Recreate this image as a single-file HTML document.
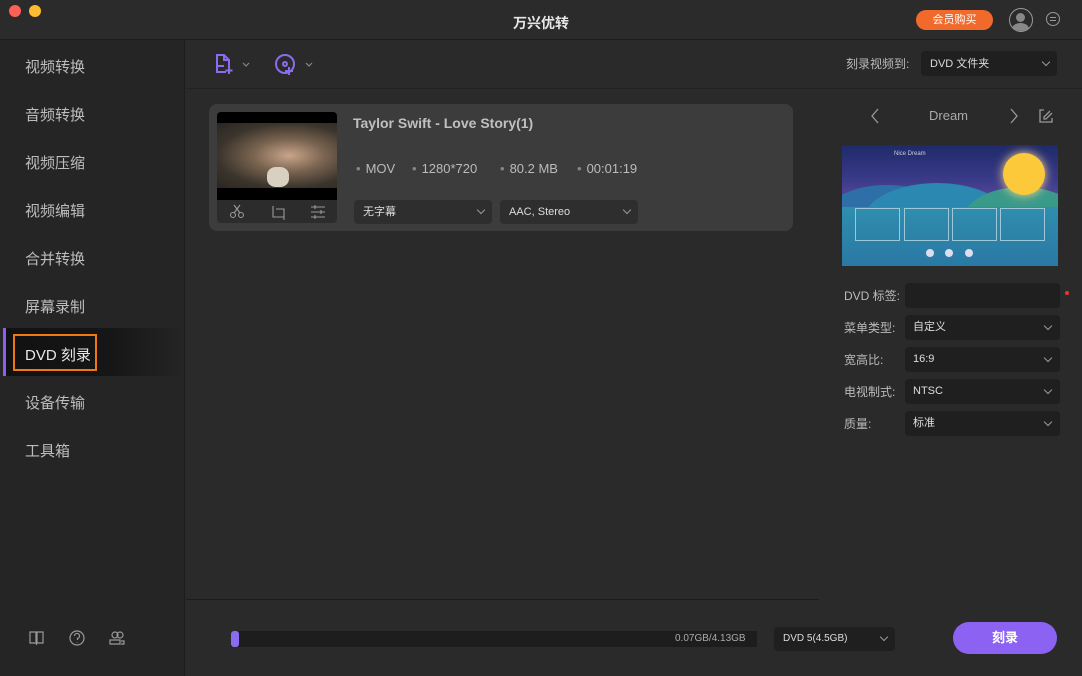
<!DOCTYPE html>
<html><head><meta charset="utf-8"><style>
*{margin:0;padding:0;box-sizing:border-box}
body{width:1082px;height:676px;overflow:hidden;background:#2a2a2a;font-family:"Liberation Sans","Noto Sans CJK SC",sans-serif;position:relative;color:#ccc}
.a{position:absolute}
.side{left:0;top:40px;width:185px;height:636px;background:#252525;border-right:1px solid #1c1c1c}
.si{position:absolute;left:25px;font-size:15px;color:#bdbdbd}
.sel{background:#313131;border-radius:4px;color:#ddd;font-size:11px;padding-left:9px;line-height:26px}
.chev{position:absolute;right:8px;top:8px;width:6px;height:6px;border-right:1px solid #999;border-bottom:1px solid #999;transform:rotate(45deg)}
.lbl{position:absolute;left:844px;font-size:12px;color:#bbb}
.f{position:absolute;left:905px;width:155px;height:25px;background:#1f1f1f;border-radius:4px;font-size:11px;color:#ddd;line-height:25px;padding-left:8px}
.f .chev{top:8px;right:9px}
.m{position:absolute;top:161px;font-size:13px;color:#bbb}
.m b{color:#888;font-weight:normal;margin-right:5px}
</style></head><body>
<div class="a" style="left:0;top:0;width:1082px;height:40px;background:#2b2b2b;border-bottom:1px solid #1e1e1e"></div>
<div class="a" style="left:9px;top:5px;width:12px;height:12px;border-radius:50%;background:#fe5f57"></div>
<div class="a" style="left:29px;top:5px;width:12px;height:12px;border-radius:50%;background:#febc2e"></div>
<div class="a" style="left:0;top:13px;width:1082px;text-align:center;font-size:14px;color:#e6e6e6;font-weight:bold">万兴优转</div>
<div class="a" style="left:916px;top:10px;width:77px;height:20px;border-radius:10px;background:#f26a2b;color:#fff;font-size:11px;text-align:center;line-height:20px">会员购买</div>
<div class="a" style="left:1009px;top:8px;width:24px;height:24px;border-radius:50%;border:1.5px solid #999;overflow:hidden"><div class="a" style="left:6px;top:4px;width:9px;height:9px;border-radius:50%;background:#888"></div><div class="a" style="left:2px;top:14px;width:17px;height:12px;border-radius:50%;background:#888"></div></div>
<div class="a" style="left:1046px;top:12px;width:14px;height:14px;border-radius:50%;border:1.3px solid #999"><div class="a" style="left:3px;top:4px;width:6px;border-top:1px solid #999"></div><div class="a" style="left:3px;top:7px;width:6px;border-top:1px solid #999"></div></div>

<div class="a side"></div>
<div class="si" style="top:56px">视频转换</div>
<div class="si" style="top:104px">音频转换</div>
<div class="si" style="top:152px">视频压缩</div>
<div class="si" style="top:200px">视频编辑</div>
<div class="si" style="top:248px">合并转换</div>
<div class="si" style="top:296px">屏幕录制</div>
<div class="a" style="left:3px;top:328px;width:181px;height:48px;background:linear-gradient(90deg,#111 0%,#161616 60%,#252525 100%)"></div>
<div class="a" style="left:3px;top:328px;width:3px;height:48px;background:#8b5cf6"></div>
<div class="a" style="left:13px;top:334px;width:84px;height:37px;border:2.5px solid #f07a10"></div>
<div class="si" style="top:344px;color:#e8e8e8">DVD 刻录</div>
<div class="si" style="top:392px">设备传输</div>
<div class="si" style="top:440px">工具箱</div>
<svg class="a" style="left:28px;top:629px" width="110" height="18" fill="none" stroke="#999" stroke-width="1.2"><path d="M2 3h6v11H2zM9 3h6v11H9zM8.5 14v2"/><circle cx="49" cy="9" r="7"/><path d="M46.5 7a2.5 2.5 0 1 1 3 2.4V11M49 13v.5"/><circle cx="87" cy="6" r="3"/><circle cx="92" cy="6" r="3"/><path d="M82 11h10v4H82zM93 12h3v3h-3"/></svg>

<div class="a" style="left:186px;top:88px;width:896px;border-top:1px solid #222"></div>
<svg class="a" style="left:212px;top:52px" width="110" height="26" fill="none" stroke="#8b6cf0" stroke-width="2"><path d="M14 20H5V3h7l5 5v7M12 3v5h5M6 14h6M17 15v7M13.5 18.5h7"/><circle cx="73" cy="12" r="9"/><circle cx="73" cy="12" r="2"/><path d="M77 15v8M73 19h8"/><path d="M31 11l3 3 3-3M94 11l3 3 3-3" stroke="#888" stroke-width="1.2"/></svg>
<div class="a" style="left:846px;top:55px;font-size:12px;color:#bbb">刻录视频到:</div>
<div class="a sel" style="left:921px;top:51px;width:136px;height:25px;background:#1f1f1f">DVD 文件夹<div class="chev"></div></div>

<div class="a" style="left:209px;top:104px;width:584px;height:127px;background:#3c3c3c;border-radius:8px"></div>
<div class="a" style="left:217px;top:112px;width:120px;height:111px;background:#2c2c2c;border-radius:4px;overflow:hidden">
<div class="a" style="left:0;top:0;width:120px;height:88px;background:#000"></div>
<div class="a" style="left:0;top:11px;width:120px;height:65px;background:radial-gradient(ellipse at 60% 50%,#c9a58a 0%,#7a6450 35%,#3a342c 70%,#2a2620 100%)"></div>
<div class="a" style="left:50px;top:55px;width:22px;height:20px;background:#d8d0c0;border-radius:40%"></div>
</div>
<svg class="a" style="left:228px;top:203px" width="100" height="18" fill="none" stroke="#999" stroke-width="1.1"><circle cx="5" cy="12" r="2.5"/><circle cx="13" cy="12" r="2.5"/><path d="M6 10L12 2M12 10L6 2"/><path d="M45 3v11h11M48 6h8v11"/><path d="M83 4h14M83 9h14M83 14h14M87 2v4M93 7v4M87 12v4"/></svg>
<div class="a" style="left:353px;top:115px;font-size:14px;font-weight:bold;color:#c0c0c0">Taylor Swift - Love Story(1)</div>
<div class="m" style="left:356px"><b>•</b>MOV</div>
<div class="m" style="left:412px"><b>•</b>1280*720</div>
<div class="m" style="left:500px"><b>•</b>80.2 MB</div>
<div class="m" style="left:577px"><b>•</b>00:01:19</div>
<div class="a sel" style="left:354px;top:200px;width:138px;height:24px;line-height:24px;background:#2e2e2e">无字幕<div class="chev" style="top:7px"></div></div>
<div class="a sel" style="left:500px;top:200px;width:138px;height:24px;line-height:24px;background:#2e2e2e">AAC, Stereo<div class="chev" style="top:7px"></div></div>

<svg class="a" style="left:868px;top:106px" width="192" height="20" fill="none" stroke="#999" stroke-width="1.3"><path d="M10 3L4 10l6 7M143 3l6 7-6 7M182 5l-6 6v2h2l6-6M176 4h-4v12h12v-4"/></svg>
<div class="a" style="left:929px;top:108px;font-size:13px;color:#aaa">Dream</div>
<div class="a" style="left:842px;top:145px;width:216px;height:121px;overflow:hidden;background:linear-gradient(180deg,#1f2a6a 0%,#3b3b8a 30%,#5a4a9a 45%,#2f7aa0 60%,#1f7aa5 80%,#2b6e9c 100%)">
<div class="a" style="left:-20px;top:40px;width:130px;height:70px;border-radius:50%;background:#2e6fa8"></div>
<div class="a" style="left:20px;top:38px;width:150px;height:80px;border-radius:50%;background:#2b88b0"></div>
<div class="a" style="left:120px;top:42px;width:120px;height:70px;border-radius:50%;background:#3a9a8a"></div>
<div class="a" style="left:0;top:62px;width:216px;height:60px;background:linear-gradient(180deg,#2f8eae,#2a78a4)"></div>
<div class="a" style="left:161px;top:8px;width:42px;height:42px;border-radius:50%;background:#fcc93a;box-shadow:0 0 10px #fd8"></div>
<div class="a" style="left:52px;top:6px;font-size:6px;color:#ccd">Nice Dream</div>
<div class="a" style="left:13px;top:63px;width:45px;height:33px;border:1px solid #9cc8d8"></div>
<div class="a" style="left:62px;top:63px;width:45px;height:33px;border:1px solid #9cc8d8"></div>
<div class="a" style="left:110px;top:63px;width:45px;height:33px;border:1px solid #9cc8d8"></div>
<div class="a" style="left:158px;top:63px;width:45px;height:33px;border:1px solid #9cc8d8"></div>
<div class="a" style="left:84px;top:104px;width:8px;height:8px;border-radius:50%;background:#dde"></div>
<div class="a" style="left:103px;top:104px;width:8px;height:8px;border-radius:50%;background:#dde"></div>
<div class="a" style="left:123px;top:104px;width:8px;height:8px;border-radius:50%;background:#dde"></div>
</div>
<div class="lbl" style="top:287px">DVD 标签:</div>
<div class="f" style="top:283px"></div>
<div class="a" style="left:1065px;top:291px;width:4px;height:4px;background:#e33;border-radius:50%"></div>
<div class="lbl" style="top:319px">菜单类型:</div><div class="f" style="top:315px">自定义<div class="chev"></div></div>
<div class="lbl" style="top:351px">宽高比:</div><div class="f" style="top:347px">16:9<div class="chev"></div></div>
<div class="lbl" style="top:383px">电视制式:</div><div class="f" style="top:379px">NTSC<div class="chev"></div></div>
<div class="lbl" style="top:415px">质量:</div><div class="f" style="top:411px">标准<div class="chev"></div></div>

<div class="a" style="left:186px;top:599px;width:633px;border-top:1px solid #1c1c1c"></div>
<div class="a" style="left:231px;top:631px;width:526px;height:16px;background:#1d1d1d"></div>
<div class="a" style="left:231px;top:631px;width:8px;height:16px;background:#8b6cf0;border-radius:3px"></div>
<div class="a" style="left:675px;top:633px;font-size:10px;color:#aaa">0.07GB/4.13GB</div>
<div class="a sel" style="left:774px;top:627px;width:121px;height:24px;line-height:24px;background:#1f1f1f;font-size:10px">DVD 5(4.5GB)<div class="chev" style="top:7px"></div></div>
<div class="a" style="left:953px;top:622px;width:104px;height:32px;border-radius:16px;background:#8b62f2;color:#fff;font-size:13px;font-weight:bold;text-align:center;line-height:32px">刻录</div>
</body></html>
